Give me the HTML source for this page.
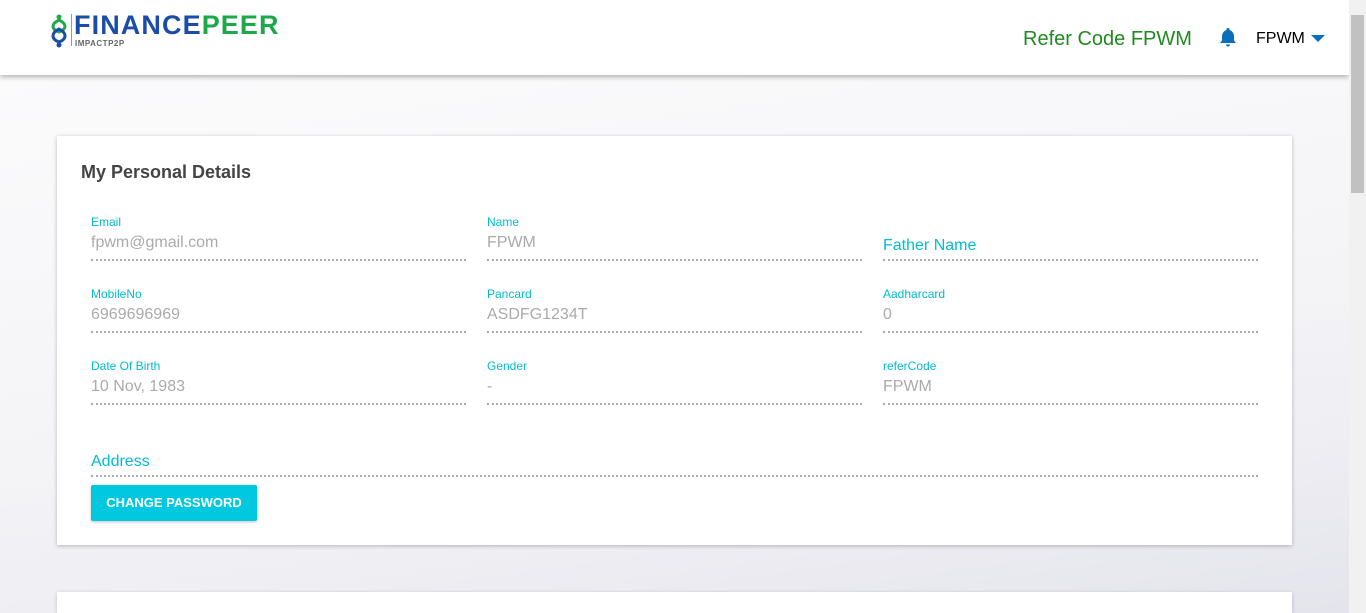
<!DOCTYPE html>
<html style="overflow:hidden;height:613px"><head><style>
html,body{overflow:hidden}
body{margin:0;width:1366px;height:613px;overflow:hidden;font-family:"Liberation Sans",sans-serif;position:relative;background:#f5f5f7}
.bgw{position:absolute;left:0;top:75px;width:1349px;height:538px;background:linear-gradient(172deg,#fbfbfc 0%,#f4f4f7 55%,#eeeef3 75%,#e4e4ec 100%)}
.hdr{position:absolute;left:0;top:0;width:1349px;height:75px;background:#fff;box-shadow:0 2px 5px rgba(0,0,0,.3);z-index:2}
.sb{position:absolute;left:1349px;top:0;width:17px;height:613px;background:#f1f1f1;z-index:3}
.thumb{position:absolute;left:1351px;top:15px;width:13px;height:178px;background:#c1c1c1;z-index:4}
.card{position:absolute;left:57px;top:136px;width:1235px;height:409px;background:#fff;box-shadow:0 1px 4px rgba(0,0,0,.25)}
.card2{position:absolute;left:57px;top:592px;width:1235px;height:21px;background:#fff;box-shadow:0 1px 4px rgba(0,0,0,.2)}
.f{position:absolute;width:375px;border-bottom:2px dotted #aaa;height:44px}
.f .l{position:absolute;top:0;font-size:12px;color:#00bcd4}
.f .v{position:absolute;top:19px;font-size:16px;color:#aaa}
.f .b{position:absolute;top:22px;font-size:16px;color:#00bcd4}
</style></head><body>
<div class="bgw"></div>
<div class="hdr">
 <svg style="position:absolute;left:49px;top:14px" width="20" height="34" viewBox="0 0 20 34">
  <circle cx="10" cy="3" r="2.5" fill="#1da84a"/><path d="M10 6 C2 10 2 15 10 18 C18 15 18 10 10 6Z" fill="none" stroke="#1da84a" stroke-width="3"/>
  <path d="M10 15 C2 19 2 25 10 28 C18 25 18 19 10 15Z" fill="none" stroke="#1a4da8" stroke-width="3"/><circle cx="10" cy="31" r="2.5" fill="#1a4da8"/></svg>
 <div style="position:absolute;left:71px;top:14px;width:1px;height:32px;background:#999"></div>
 <div style="position:absolute;left:74px;top:10px;font-size:27px;font-weight:bold;letter-spacing:1.1px;color:#1a4da8">FINANCE<span style="color:#1da84a">PEER</span></div>
 <div style="position:absolute;left:75px;top:39px;font-size:8px;font-weight:bold;color:#666;letter-spacing:.5px">IMPACTP2P</div>
 <div style="position:absolute;left:1023px;top:28px;font-size:20px;color:#1f8a1f">Refer Code FPWM</div>
 <svg style="position:absolute;left:1219px;top:27px" width="18" height="20" viewBox="0 0 18 20"><path d="M9 1a1.5 1.5 0 0 1 1.5 1.5v.5C13.5 4 15 6.5 15 9.5v4l2 2.5H1l2-2.5v-4C3 6.5 4.5 4 7.5 3v-.5A1.5 1.5 0 0 1 9 1z" fill="#0a6ebd"/><path d="M7 17.5h4a2 2 0 0 1-4 0z" fill="#0a6ebd"/></svg>
 <div style="position:absolute;left:1256px;top:30px;font-size:16px;color:#000">FPWM</div>
 <div style="position:absolute;left:1311px;top:35px;width:0;height:0;border-left:7px solid transparent;border-right:7px solid transparent;border-top:7px solid #0a6ebd"></div>
</div>
<div class="card">
 <div style="position:absolute;left:24px;top:26px;font-size:18px;font-weight:bold;color:#444">My Personal Details</div>
 <div class="f" style="left:34px;top:79px"><div class="l">Email</div><div class="v">fpwm@gmail.com</div></div>
 <div class="f" style="left:430px;top:79px"><div class="l">Name</div><div class="v">FPWM</div></div>
 <div class="f" style="left:826px;top:79px"><div class="b">Father Name</div></div>
 <div class="f" style="left:34px;top:151px"><div class="l">MobileNo</div><div class="v">6969696969</div></div>
 <div class="f" style="left:430px;top:151px"><div class="l">Pancard</div><div class="v">ASDFG1234T</div></div>
 <div class="f" style="left:826px;top:151px"><div class="l">Aadharcard</div><div class="v">0</div></div>
 <div class="f" style="left:34px;top:223px"><div class="l">Date Of Birth</div><div class="v">10 Nov, 1983</div></div>
 <div class="f" style="left:430px;top:223px"><div class="l">Gender</div><div class="v">-</div></div>
 <div class="f" style="left:826px;top:223px"><div class="l">referCode</div><div class="v">FPWM</div></div>
 <div class="f" style="left:34px;top:295px;width:1167px"><div class="b">Address</div></div>
 <div style="position:absolute;left:34px;top:349px;width:166px;height:36px;background:#00c8de;border-radius:2px;box-shadow:0 1px 3px rgba(0,0,0,.25);color:#fff;font-size:13px;font-weight:bold;text-align:center;line-height:36px">CHANGE PASSWORD</div>
</div>
<div class="card2"></div>
<div class="sb"></div><div class="thumb"></div>
</body></html>
